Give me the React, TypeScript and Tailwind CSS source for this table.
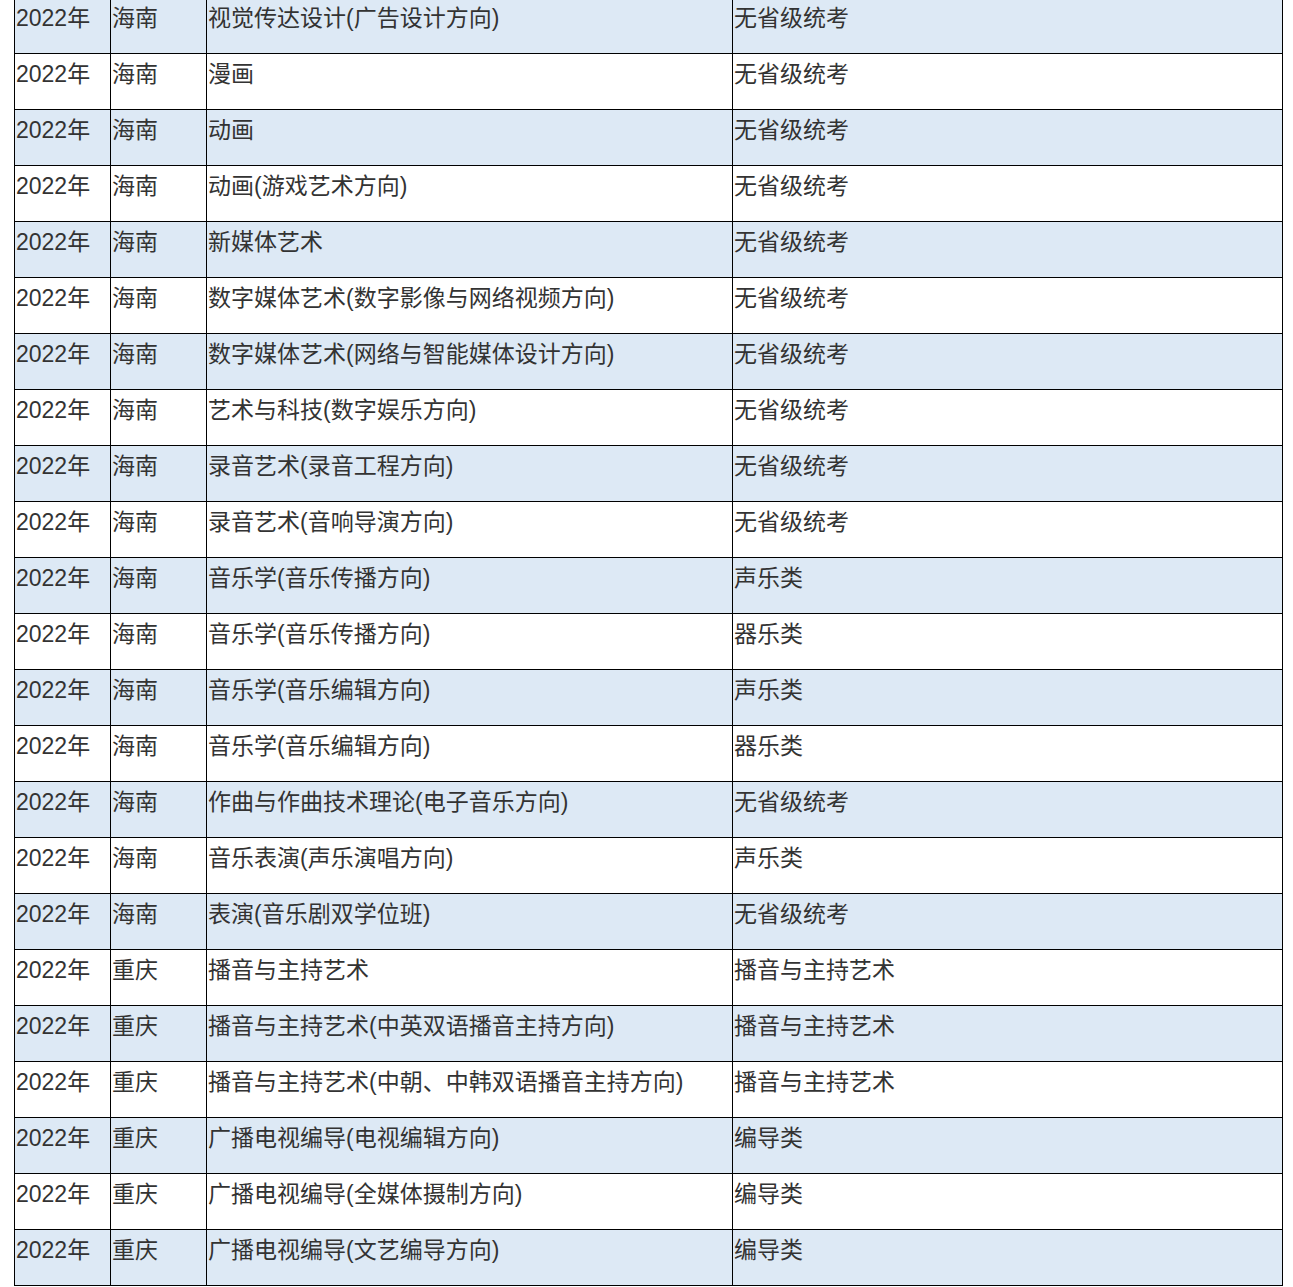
import React from "react";

const rows: [string, string, string][] = [
  ["海南", "视觉传达设计(广告设计方向)", "无省级统考"],
  ["海南", "漫画", "无省级统考"],
  ["海南", "动画", "无省级统考"],
  ["海南", "动画(游戏艺术方向)", "无省级统考"],
  ["海南", "新媒体艺术", "无省级统考"],
  ["海南", "数字媒体艺术(数字影像与网络视频方向)", "无省级统考"],
  ["海南", "数字媒体艺术(网络与智能媒体设计方向)", "无省级统考"],
  ["海南", "艺术与科技(数字娱乐方向)", "无省级统考"],
  ["海南", "录音艺术(录音工程方向)", "无省级统考"],
  ["海南", "录音艺术(音响导演方向)", "无省级统考"],
  ["海南", "音乐学(音乐传播方向)", "声乐类"],
  ["海南", "音乐学(音乐传播方向)", "器乐类"],
  ["海南", "音乐学(音乐编辑方向)", "声乐类"],
  ["海南", "音乐学(音乐编辑方向)", "器乐类"],
  ["海南", "作曲与作曲技术理论(电子音乐方向)", "无省级统考"],
  ["海南", "音乐表演(声乐演唱方向)", "声乐类"],
  ["海南", "表演(音乐剧双学位班)", "无省级统考"],
  ["重庆", "播音与主持艺术", "播音与主持艺术"],
  ["重庆", "播音与主持艺术(中英双语播音主持方向)", "播音与主持艺术"],
  ["重庆", "播音与主持艺术(中朝、中韩双语播音主持方向)", "播音与主持艺术"],
  ["重庆", "广播电视编导(电视编辑方向)", "编导类"],
  ["重庆", "广播电视编导(全媒体摄制方向)", "编导类"],
  ["重庆", "广播电视编导(文艺编导方向)", "编导类"],
];

export default function App() {
  return (
    <div className="h-[1287px] overflow-hidden bg-white">
      <div
        className="ml-[14px] mt-[-2px] w-[1269px] border-l border-black text-[23px] leading-[26px] text-[#333]"
        style={{ fontFamily: '"Liberation Sans", "Noto Sans CJK SC", sans-serif' }}
      >
        {rows.map(([prov, major, cat], i) => (
          <div
            key={i}
            className={`grid h-[56px] grid-cols-[96px_96px_526px_550px] border-b border-black ${
              i % 2 === 0 ? "bg-[#dde9f5]" : "bg-white"
            }`}
          >
            <div className="border-r border-black pl-px pt-[7px]">2022年</div>
            <div className="border-r border-black pl-px pt-[7px]">{prov}</div>
            <div className="border-r border-black pl-px pt-[7px]">{major}</div>
            <div className="border-r border-black pl-px pt-[7px]">{cat}</div>
          </div>
        ))}
      </div>
    </div>
  );
}
